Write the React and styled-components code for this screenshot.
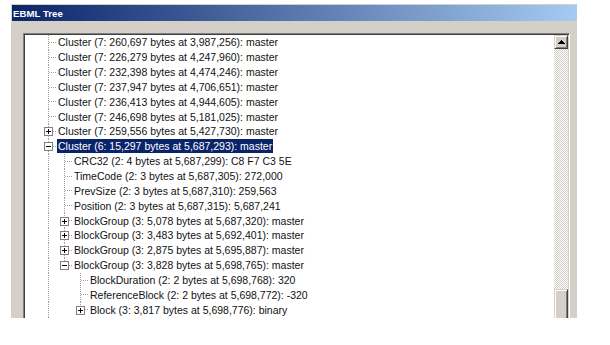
import React from "react";
import styled, { createGlobalStyle, css } from "styled-components";

const ROW_H = 14.85;
const CELL_W = 16;

const Global = createGlobalStyle`
  html, body { margin: 0; padding: 0; background: #ffffff; }
  body { font-family: "Liberation Sans", Arial, sans-serif; }
`;

const Page = styled.div`
  padding: 3px 0 0 10px;
`;

const Window = styled.div`
  width: 565px;
  height: 313px;
  padding: 2px 0 0 2px;
  background: #d4d0c8;
  box-shadow: inset 1px 1px 0 #ffffff;
  overflow: hidden;
  display: flex;
  flex-direction: column;
`;

const TitleBar = styled.div`
  height: 16px;
  flex: none;
  display: flex;
  align-items: center;
  padding-left: 1px;
  background: linear-gradient(to right, #0a246a, #a6caf0);
  color: #ffffff;
  font-family: "Liberation Sans", Arial, sans-serif;
  font-weight: bold;
  font-size: 9.6px;
  letter-spacing: 0.05px;
`;

const Body = styled.div`
  flex: 1;
  padding: 12px 7px 0 11px;
  min-height: 0;
`;

const TreeBox = styled.div`
  height: 320px;
  display: flex;
  border-style: solid;
  border-width: 1px;
  border-color: #808080 #ffffff #ffffff #808080;
  box-shadow: inset 1px 1px 0 #404040, inset -1px -1px 0 #d4d0c8;
  padding: 1px;
  background: #ffffff;
`;

const TreeList = styled.div`
  flex: 1;
  min-width: 0;
  padding-left: 15px;
  display: flex;
  flex-direction: column;
`;

const Row = styled.div`
  height: ${ROW_H}px;
  display: flex;
  align-items: center;
  flex: none;
`;

const Cell = styled.div`
  width: ${CELL_W}px;
  height: 100%;
  flex: none;
  position: relative;
  svg { display: block; }
`;

const ExpandBox = styled.div`
  position: absolute;
  left: 4px;
  top: 50%;
  width: 9px;
  height: 9px;
  margin-top: -4px;
  box-sizing: border-box;
  border: 1px solid #808080;
  background: #ffffff;
  &::before {
    content: "";
    position: absolute;
    left: 1px;
    top: 3px;
    width: 5px;
    height: 1px;
    background: #000000;
  }
  ${(p) =>
    p.$plus &&
    css`
      &::after {
        content: "";
        position: absolute;
        left: 3px;
        top: 1px;
        width: 1px;
        height: 5px;
        background: #000000;
      }
    `}
`;

const Label = styled.span`
  margin-left: 1px;
  padding: 0 1px;
  height: 14px;
  line-height: 14px;
  font-family: "Liberation Sans", Arial, sans-serif;
  font-size: 10.5px;
  white-space: nowrap;
  color: ${(p) => (p.$selected ? "#ffffff" : "#111111")};
  background: ${(p) => (p.$selected ? "#0a246a" : "transparent")};
`;

const ScrollBar = styled.div`
  width: 14px;
  flex: none;
  display: flex;
  flex-direction: column;
`;

const raised = css`
  background: #d4d0c8;
  box-sizing: border-box;
  border-style: solid;
  border-width: 1px;
  border-color: #d4d0c8 #404040 #404040 #d4d0c8;
  box-shadow: inset 1px 1px 0 #ffffff, inset -1px -1px 0 #808080;
`;

const ArrowButton = styled.div`
  ${raised};
  height: 14px;
  flex: none;
  display: flex;
  align-items: center;
  justify-content: center;
`;

const Track = styled.div`
  flex: 1;
  padding-top: 240px;
  background: repeating-conic-gradient(#d4d0c8 0 25%, #ffffff 0 50%) 0 0 / 2px 2px;
`;

const Thumb = styled.div`
  ${raised};
  height: 40px;
`;

function Connector({ type, box }) {
  const h = ROW_H;
  const mid = Math.round(h / 2) + 0.5;
  const x = 8.5;
  return (
    <Cell>
      {type !== "blank" && (
        <svg width={CELL_W} height={h} shapeRendering="crispEdges">
          {(type === "pipe" || type === "tee") && (
            <line x1={x} y1={0} x2={x} y2={h} stroke="#a0a0a0" strokeDasharray="1 1" />
          )}
          {type === "ell" && (
            <line x1={x} y1={0} x2={x} y2={mid} stroke="#a0a0a0" strokeDasharray="1 1" />
          )}
          {(type === "tee" || type === "ell") && (
            <line x1={x} y1={mid} x2={CELL_W} y2={mid} stroke="#a0a0a0" strokeDasharray="1 1" />
          )}
        </svg>
      )}
      {box && <ExpandBox $plus={box === "plus"} />}
    </Cell>
  );
}

const rows = [
  { guides: ["tee"], text: "Cluster (7: 260,697 bytes at 3,987,256): master" },
  { guides: ["tee"], text: "Cluster (7: 226,279 bytes at 4,247,960): master" },
  { guides: ["tee"], text: "Cluster (7: 232,398 bytes at 4,474,246): master" },
  { guides: ["tee"], text: "Cluster (7: 237,947 bytes at 4,706,651): master" },
  { guides: ["tee"], text: "Cluster (7: 236,413 bytes at 4,944,605): master" },
  { guides: ["tee"], text: "Cluster (7: 246,698 bytes at 5,181,025): master" },
  { guides: ["tee"], box: "plus", text: "Cluster (7: 259,556 bytes at 5,427,730): master" },
  { guides: ["tee"], box: "minus", selected: true, text: "Cluster (6: 15,297 bytes at 5,687,293): master" },
  { guides: ["pipe", "tee"], text: "CRC32 (2: 4 bytes at 5,687,299): C8 F7 C3 5E" },
  { guides: ["pipe", "tee"], text: "TimeCode (2: 3 bytes at 5,687,305): 272,000" },
  { guides: ["pipe", "tee"], text: "PrevSize (2: 3 bytes at 5,687,310): 259,563" },
  { guides: ["pipe", "tee"], text: "Position (2: 3 bytes at 5,687,315): 5,687,241" },
  { guides: ["pipe", "tee"], box: "plus", text: "BlockGroup (3: 5,078 bytes at 5,687,320): master" },
  { guides: ["pipe", "tee"], box: "plus", text: "BlockGroup (3: 3,483 bytes at 5,692,401): master" },
  { guides: ["pipe", "tee"], box: "plus", text: "BlockGroup (3: 2,875 bytes at 5,695,887): master" },
  { guides: ["pipe", "ell"], box: "minus", text: "BlockGroup (3: 3,828 bytes at 5,698,765): master" },
  { guides: ["pipe", "blank", "tee"], text: "BlockDuration (2: 2 bytes at 5,698,768): 320" },
  { guides: ["pipe", "blank", "tee"], text: "ReferenceBlock (2: 2 bytes at 5,698,772): -320" },
  { guides: ["pipe", "blank", "ell"], box: "plus", text: "Block (3: 3,817 bytes at 5,698,776): binary" },
  { guides: ["pipe"], text: "" },
];

export default function App() {
  return (
    <>
      <Global />
      <Page>
        <Window>
          <TitleBar>EBML Tree</TitleBar>
          <Body>
            <TreeBox>
              <TreeList>
                {rows.map((r, i) => (
                  <Row key={i}>
                    {r.guides.map((g, j) => (
                      <Connector
                        key={j}
                        type={g}
                        box={j === r.guides.length - 1 ? r.box : undefined}
                      />
                    ))}
                    {r.text && <Label $selected={r.selected}>{r.text}</Label>}
                  </Row>
                ))}
              </TreeList>
              <ScrollBar>
                <ArrowButton>
                  <svg width="7" height="4" viewBox="0 0 7 4" shapeRendering="crispEdges">
                    <path d="M3 0h1v1h1v1h1v1h1v1H0V3h1V2h1V1h1z" fill="#000" />
                  </svg>
                </ArrowButton>
                <Track>
                  <Thumb />
                </Track>
              </ScrollBar>
            </TreeBox>
          </Body>
        </Window>
      </Page>
    </>
  );
}
